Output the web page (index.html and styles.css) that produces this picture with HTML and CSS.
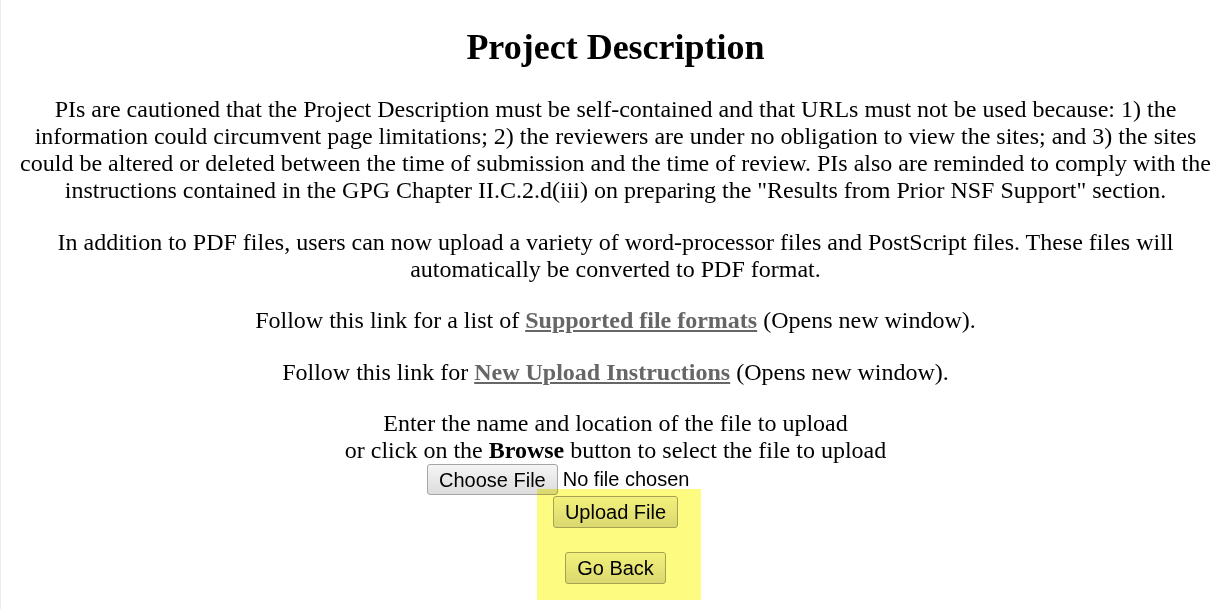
FILE: index.html
```html
<!DOCTYPE html>
<html lang="en">
<head>
<meta charset="utf-8">
<title>Project Description</title>
<link rel="stylesheet" href="styles.css">
</head>
<body>
<div class="page">
  <h1 class="title">Project Description</h1>
  <p class="para">PIs are cautioned that the Project Description must be self-contained and that URLs must not be used because: 1) the information could circumvent page limitations; 2) the reviewers are under no obligation to view the sites; and 3) the sites could be altered or deleted between the time of submission and the time of review. PIs also are reminded to comply with the instructions contained in the GPG Chapter II.C.2.d(iii) on preparing the "Results from Prior NSF Support" section.</p>
  <p class="para">In addition to PDF files, users can now upload a variety of word-processor files and PostScript files. These files will automatically be converted to PDF format.</p>
  <p class="para">Follow this link for a list of <a class="link" href="#">Supported file formats</a> (Opens new window).</p>
  <p class="para">Follow this link for <a class="link" href="#">New Upload Instructions</a> (Opens new window).</p>
  <div class="upload">
    <div class="prompt">Enter the name and location of the file to upload<br>or click on the <b>Browse</b> button to select the file to upload</div>
    <div class="file-row">
      <button class="btn btn-choose" type="button">Choose File</button>
      <span class="file-name">No file chosen</span>
    </div>
    <div class="actions">
      <button class="btn" type="button">Upload File</button>
      <button class="btn btn-back" type="button">Go Back</button>
      <div class="highlight"></div>
    </div>
  </div>
</div>
</body>
</html>
```
FILE: styles.css
```css
html, body {
  margin: 0;
  padding: 0;
  background: #ffffff;
}
body {
  font-family: "Liberation Serif", "Times New Roman", serif;
  font-size: 24px;
  color: #000;
}
.page {
  min-height: 609px;
  box-sizing: border-box;
  padding: 27px 8px 0 7px;
  border-left: 1px solid #ececec;
  text-align: center;
}
.title {
  font-size: 36px;
  line-height: 41px;
  font-weight: bold;
  margin: 0 0 28px;
}
.para {
  margin: 0 0 24.5px;
  line-height: 27px;
}
.link {
  color: #666666;
  font-weight: bold;
  text-decoration: underline;
}
.upload {
  display: flex;
  flex-direction: column;
  align-items: center;
}
.prompt {
  line-height: 27px;
}
.file-row {
  width: 377px;
  display: flex;
  align-items: center;
  gap: 5px;
}
.btn {
  font-family: "Liberation Sans", Arial, sans-serif;
  font-size: 20px;
  line-height: 24px;
  height: 32px;
  box-sizing: border-box;
  color: #000;
  padding: 3px 11px;
  border: 1px solid #a6a6a6;
  border-radius: 3px;
  background: linear-gradient(#f5f5f5, #dcdcdc);
  cursor: default;
}
.btn-choose {
  height: 31px;
}
.file-name {
  font-family: "Liberation Sans", Arial, sans-serif;
  font-size: 20px;
  line-height: 23px;
}
.actions {
  position: relative;
  display: flex;
  flex-direction: column;
  align-items: center;
  padding-top: 1px;
}
.btn-back {
  margin-top: 24px;
}
.highlight {
  position: absolute;
  top: -6px;
  left: calc(50% - 78.5px);
  width: 164px;
  height: 111px;
  background: rgb(253, 251, 128);
  mix-blend-mode: multiply;
  pointer-events: none;
}
```
